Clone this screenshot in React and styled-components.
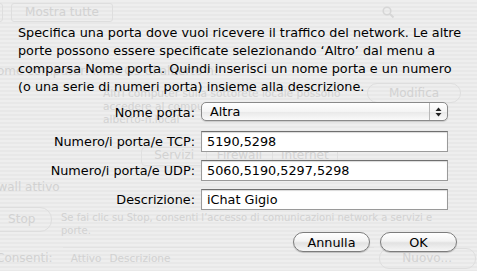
import React from 'react';
import styled, { createGlobalStyle } from 'styled-components';

const GlobalStyle = createGlobalStyle`
  html, body {
    margin: 0;
    padding: 0;
    background: #ececec;
  }
`;

const font = `"DejaVu Sans", "Liberation Sans", sans-serif`;

const Screen = styled.div`
  position: relative;
  width: 477px;
  height: 271px;
  overflow: hidden;
  font-family: ${font};
  background: repeating-linear-gradient(
    to bottom,
    #eeeeee 0px,
    #eeeeee 2px,
    #e8e8e8 2px,
    #e8e8e8 4px
  );
`;

// faded window that sits behind the sheet
const BackWindow = styled.div`
  color: #d2d2d2;
  font-size: 12px;
  line-height: 15px;
`;

const Toolbar = styled.div`
  display: flex;
  align-items: center;
  height: 25px;
  padding-right: 82px;
`;

const FadedButton = styled.div`
  display: flex;
  align-items: center;
  justify-content: center;
  height: ${p => p.$h || 19}px;
  width: ${p => p.$w}px;
  margin-left: ${p => p.$ml || 0}px;
  margin-top: ${p => p.$mt || 0}px;
  border: 1px solid #dedede;
  border-radius: ${p => p.$r || 3}px;
  box-sizing: border-box;
  flex-shrink: 0;
`;

const Spacer = styled.div`
  flex: 1;
`;

const LineText = styled.div`
  margin-left: ${p => p.$ml || 0}px;
  margin-top: ${p => p.$mt || 0}px;
  font-size: ${p => p.$fs || 12}px;
  white-space: nowrap;
`;

const InfoRow = styled.div`
  display: flex;
  align-items: flex-start;
  margin-top: 8px;
`;

const InfoText = styled.div`
  width: 264px;
  flex-shrink: 0;
  padding-left: 103px;
  font-size: 10.6px;
  line-height: 13px;
  white-space: nowrap;
`;

const Tabs = styled.div`
  display: flex;
  margin: 21px 0 0 141px;
  height: 17px;
  border: 1px solid #e0e0e0;
  border-radius: 4px;
  width: 195px;
  font-size: 12px;
`;

const Tab = styled.div`
  flex: 1;
  text-align: center;
  border-left: ${p => (p.$first ? 'none' : '1px solid #e0e0e0')};
`;

const StopRow = styled.div`
  display: flex;
  align-items: flex-start;
  margin-top: 12px;
`;

const StopText = styled.div`
  margin-left: 9px;
  margin-top: 4px;
  font-size: 10px;
  line-height: 13px;
  white-space: nowrap;
`;

const BottomRow = styled.div`
  display: flex;
  align-items: center;
  margin-top: 10px;
`;

const TableHead = styled.div`
  display: flex;
  gap: 8px;
  width: 295px;
  margin-left: 10px;
  padding: 3px 8px;
  font-size: 10.5px;
  border-top: 1px solid #e2e2e2;
`;

// the sheet in front
const Sheet = styled.div`
  position: absolute;
  inset: 0;
  padding: 24px 0 0 18px;
  color: #000;
`;

const Message = styled.p`
  margin: 0;
  font-size: 12.8px;
  line-height: 18px;
  white-space: nowrap;
`;

const Form = styled.div`
  display: grid;
  grid-template-columns: 177px 247px;
  column-gap: 6px;
  row-gap: 8px;
  align-items: center;
  margin-top: 6px;
  font-size: 12.8px;
`;

const Label = styled.div`
  text-align: right;
  white-space: nowrap;
`;

const Popup = styled.div`
  display: flex;
  align-items: center;
  height: 19px;
  margin-bottom: 2px;
  border: 1px solid #8a8a8a;
  border-radius: 5px;
  box-sizing: border-box;
  background: linear-gradient(#ffffff, #f4f4f4 50%, #e8e8e8 51%, #fafafa);
  box-shadow: 0 1px 1px rgba(0, 0, 0, 0.15);
  padding-left: 8px;
`;

const PopupText = styled.span`
  flex: 1;
`;

const PopupArrows = styled.div`
  display: flex;
  align-items: center;
  justify-content: center;
  width: 17px;
  height: 100%;
  border-left: 1px solid #b8b8b8;
`;

const Field = styled.div`
  height: 21px;
  box-sizing: border-box;
  padding: 0 5px;
  display: flex;
  align-items: center;
  background: #fff;
  border: 1px solid #9a9a9a;
  border-top-color: #6f6f6f;
  box-shadow: inset 0 1px 1px rgba(0, 0, 0, 0.15);
`;

const ButtonRow = styled.div`
  display: flex;
  justify-content: flex-end;
  gap: 10px;
  margin-top: 22px;
  padding-right: 20px;
`;

const PillButton = styled.div`
  width: 77px;
  height: 20px;
  box-sizing: border-box;
  display: flex;
  align-items: center;
  justify-content: center;
  font-size: 12.8px;
  border: 1px solid #7c7c7c;
  border-radius: 10px;
  background: linear-gradient(#ffffff, #f3f3f3 45%, #e2e2e2 55%, #f6f6f6);
  box-shadow: 0 1px 1px rgba(0, 0, 0, 0.2);
`;

const Arrows = () => (
  <svg width="7" height="10" viewBox="0 0 7 10">
    <path d="M3.5 0.5 L6.5 4 L0.5 4 Z" fill="#222" />
    <path d="M3.5 9.5 L6.5 6 L0.5 6 Z" fill="#222" />
  </svg>
);

const SearchIcon = () => (
  <svg width="13" height="13" viewBox="0 0 13 13">
    <circle cx="5" cy="5" r="3.8" fill="none" stroke="#d6d6d6" strokeWidth="1.6" />
    <path d="M8 8 L11.5 11.5" stroke="#d6d6d6" strokeWidth="2" />
  </svg>
);

const App = () => (
  <>
    <GlobalStyle />
    <Screen>
      <BackWindow>
        <Toolbar>
          <FadedButton $w={14} $ml={-11} />
          <FadedButton $w={102} $ml={8}>Mostra tutte</FadedButton>
          <Spacer />
          <SearchIcon />
        </Toolbar>
        <LineText $ml={-12} $mt={39}>Nome computer: iMac G5 di alberto n.</LineText>
        <InfoRow>
          <InfoText>
            Altri computer sulla sottorete locale possono
            <br />
            accedere al computer
            <br />
            alberto-n.local
          </InfoText>
          <FadedButton $w={94} $h={20} $r={10} $mt={-4}>Modifica</FadedButton>
        </InfoRow>
        <Tabs>
          <Tab $first>Servizi</Tab>
          <Tab>Firewall</Tab>
          <Tab>Internet</Tab>
        </Tabs>
        <LineText $ml={-24} $mt={14}>Firewall attivo</LineText>
        <StopRow>
          <FadedButton $w={72} $h={25} $r={12} $ml={-20}>
            &nbsp;&nbsp;&nbsp;Stop
          </FadedButton>
          <StopText>
            Se fai clic su Stop, consenti l’accesso di comunicazioni network a servizi e
            <br />
            porte.
          </StopText>
        </StopRow>
        <BottomRow>
          <LineText $ml={-4}>Consenti:</LineText>
          <TableHead>
            <span>Attivo</span>
            <span>Descrizione</span>
          </TableHead>
          <FadedButton $w={97} $h={21} $r={10} $ml={5}>Nuovo...</FadedButton>
        </BottomRow>
      </BackWindow>

      <Sheet>
        <Message>
          Specifica una porta dove vuoi ricevere il traffico del network. Le altre
          <br />
          porte possono essere specificate selezionando ‘Altro’ dal menu a
          <br />
          comparsa Nome porta. Quindi inserisci un nome porta e un numero
          <br />
          (o una serie di numeri porta) insieme alla descrizione.
        </Message>
        <Form>
          <Label>Nome porta:</Label>
          <Popup>
            <PopupText>Altra</PopupText>
            <PopupArrows>
              <Arrows />
            </PopupArrows>
          </Popup>
          <Label>Numero/i porta/e TCP:</Label>
          <Field>5190,5298</Field>
          <Label>Numero/i porta/e UDP:</Label>
          <Field>5060,5190,5297,5298</Field>
          <Label>Descrizione:</Label>
          <Field>iChat Gigio</Field>
        </Form>
        <ButtonRow>
          <PillButton>Annulla</PillButton>
          <PillButton>OK</PillButton>
        </ButtonRow>
      </Sheet>
    </Screen>
  </>
);

export default App;
